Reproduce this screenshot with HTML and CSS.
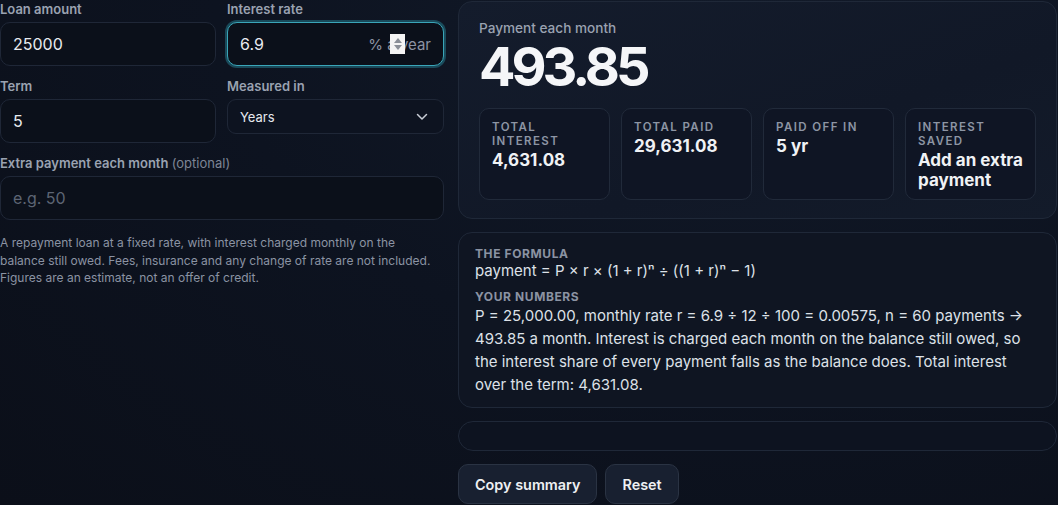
FILE: index.html
```html
<!DOCTYPE html>
<html lang="en">
<head>
<meta charset="utf-8">
<title>Loan calculator</title>
<link rel="stylesheet" href="styles.css">
</head>
<body>
<div class="page">
  <section class="inputs">
    <div class="grid2">
      <div class="field">
        <label class="label">Loan amount</label>
        <div class="input"><span class="val">25000</span></div>
      </div>
      <div class="field">
        <label class="label">Interest rate</label>
        <div class="input focus">
          <span class="val">6.9</span>
          <span class="suffix">% a year</span>
          <span class="spin"><svg width="10" height="16" viewBox="0 0 10 16"><path d="M5 2 L9 7 H1 Z" fill="#8a8f98"/><path d="M5 14 L9 9 H1 Z" fill="#8a8f98"/></svg></span>
        </div>
      </div>
      <div class="field">
        <label class="label">Term</label>
        <div class="input"><span class="val">5</span></div>
      </div>
      <div class="field">
        <label class="label">Measured in</label>
        <div class="select"><span>Years</span>
          <svg width="12" height="8" viewBox="0 0 12 8"><path d="M1.5 1.5 L6 6 L10.5 1.5" fill="none" stroke="#c9ced6" stroke-width="1.5" stroke-linecap="round" stroke-linejoin="round"/></svg>
        </div>
      </div>
    </div>
    <div class="field">
      <label class="label">Extra payment each month <span class="opt">(optional)</span></label>
      <div class="input"><span class="ph">e.g. 50</span></div>
    </div>
    <p class="note">A repayment loan at a fixed rate, with interest charged monthly on the balance still owed. Fees, insurance and any change of rate are not included. Figures are an estimate, not an offer of credit.</p>
  </section>
  <section class="results">
    <div class="card main">
      <div class="cap">Payment each month</div>
      <div class="big">493.85</div>
      <div class="stats">
        <div class="stat"><div class="slabel">Total interest</div><div class="sval">4,631.08</div></div>
        <div class="stat"><div class="slabel">Total paid</div><div class="sval">29,631.08</div></div>
        <div class="stat"><div class="slabel">Paid off in</div><div class="sval">5 yr</div></div>
        <div class="stat"><div class="slabel">Interest saved</div><div class="sval">Add an extra payment</div></div>
      </div>
    </div>
    <div class="card formula">
      <div class="flabel">The formula</div>
      <div class="ftext">payment = P × r × (1 + r)ⁿ ÷ ((1 + r)ⁿ − 1)</div>
      <div class="flabel second">Your numbers</div>
      <p class="fpara">P = 25,000.00, monthly rate r = 6.9 ÷ 12 ÷ 100 = 0.00575, n = 60 payments → 493.85 a month. Interest is charged each month on the balance still owed, so the interest share of every payment falls as the balance does. Total interest over the term: 4,631.08.</p>
    </div>
    <div class="bar"></div>
    <div class="actions">
      <button class="btn">Copy summary</button>
      <button class="btn">Reset</button>
    </div>
  </section>
</div>
</body>
</html>
```
FILE: styles.css
```css
* { box-sizing: border-box; }
html, body { margin: 0; padding: 0; }
body {
  width: 1058px;
  height: 505px;
  overflow: hidden;
  font-family: Inter, "Noto Sans", sans-serif;
  color: #e6e9ef;
  background: radial-gradient(ellipse at 70% 0%, #121a29 0%, #0d1320 50%, #0b0f19 100%);
}
.page {
  display: grid;
  grid-template-columns: 444px 599px;
  column-gap: 14px;
  width: 1057px;
}
.inputs { display: flex; flex-direction: column; gap: 11px; }
.grid2 {
  display: grid;
  grid-template-columns: 216px 217px;
  column-gap: 11px;
  row-gap: 11px;
}
.field { display: flex; flex-direction: column; gap: 5px; }
.label {
  font-size: 13px;
  line-height: 17px;
  font-weight: 600;
  color: #9aa2b1;
  padding-top: 1px;
  margin-bottom: -1px;
}
.opt { font-weight: 400; color: #7d8595; }
.input {
  position: relative;
  height: 44px;
  border: 1px solid #1f2737;
  border-radius: 10px;
  background: #0b101a;
  display: flex;
  align-items: center;
  padding: 0 12px;
  font-size: 16px;
}
.input.focus {
  border-color: #3aa5b8;
  box-shadow: 0 0 0 2px rgba(40, 140, 160, 0.45);
}
.val { color: #e8ebf0; }
.ph { color: #5d6574; }
.suffix {
  margin-left: auto;
  color: #8b93a3;
  font-size: 15px;
}
.spin {
  position: absolute;
  left: 162px;
  top: 11px;
  width: 15px;
  height: 20px;
  background: #f4f4f4;
  display: flex;
  align-items: center;
  justify-content: center;
}
.select {
  height: 35px;
  border: 1px solid #1f2737;
  border-radius: 9px;
  background: #0d1320;
  display: flex;
  align-items: center;
  justify-content: space-between;
  padding: 0 15px 0 12px;
  font-size: 13px;
  color: #e6e9ef;
}
.note {
  margin: 3px 0 0;
  max-width: 438px;
  font-size: 12px;
  line-height: 17.5px;
  color: #8b93a3;
}
.results {
  display: flex;
  flex-direction: column;
  gap: 13px;
  padding-top: 1px;
}
.card {
  border: 1px solid #1f2838;
  border-radius: 14px;
}
.main {
  background: linear-gradient(160deg, #141c2c 0%, #111827 60%, #131b2a 100%);
  padding: 17px 20px 18px;
}
.cap {
  font-size: 13.6px;
  line-height: 18px;
  font-weight: 500;
  color: #9aa2b1;
}
.big {
  font-size: 54px;
  line-height: 60px;
  font-weight: 700;
  letter-spacing: -4px;
  color: #f5f6f8;
  margin: 0 0 11px;
}
.stats {
  display: grid;
  grid-template-columns: repeat(4, 131px);
  column-gap: 11px;
}
.stat {
  height: 92px;
  border: 1px solid #212a3a;
  border-radius: 10px;
  background: #0f1524;
  padding: 11px 9px 11px 12px;
}
.slabel {
  font-size: 11.5px;
  line-height: 14px;
  font-weight: 600;
  text-transform: uppercase;
  letter-spacing: 1.4px;
  color: #8d95a4;
}
.sval {
  font-size: 17px;
  line-height: 20px;
  font-weight: 700;
  color: #f0f2f5;
  margin-top: 2px;
}
.formula {
  background: #0f1522;
  padding: 13px 16px 11px;
}
.flabel {
  font-size: 12px;
  line-height: 15px;
  font-weight: 700;
  text-transform: uppercase;
  letter-spacing: 0.05em;
  color: #8b93a3;
}
.flabel.second { margin-top: 8px; }
.ftext {
  font-size: 15px;
  line-height: 20px;
  color: #dde1e8;
}
.fpara {
  margin: 0;
  font-size: 15px;
  line-height: 23px;
  color: #dde1e8;
}
.bar {
  height: 30px;
  border: 1px solid #1f2838;
  border-radius: 15px;
  background: #0d1320;
}
.actions { display: flex; gap: 8px; }
.btn {
  height: 40px;
  padding: 0 16px;
  border: 1px solid #2a3343;
  border-radius: 10px;
  background: #182030;
  color: #eef0f3;
  font-family: Inter, "Noto Sans", sans-serif;
  font-size: 14.4px;
  font-weight: 600;
}
```
